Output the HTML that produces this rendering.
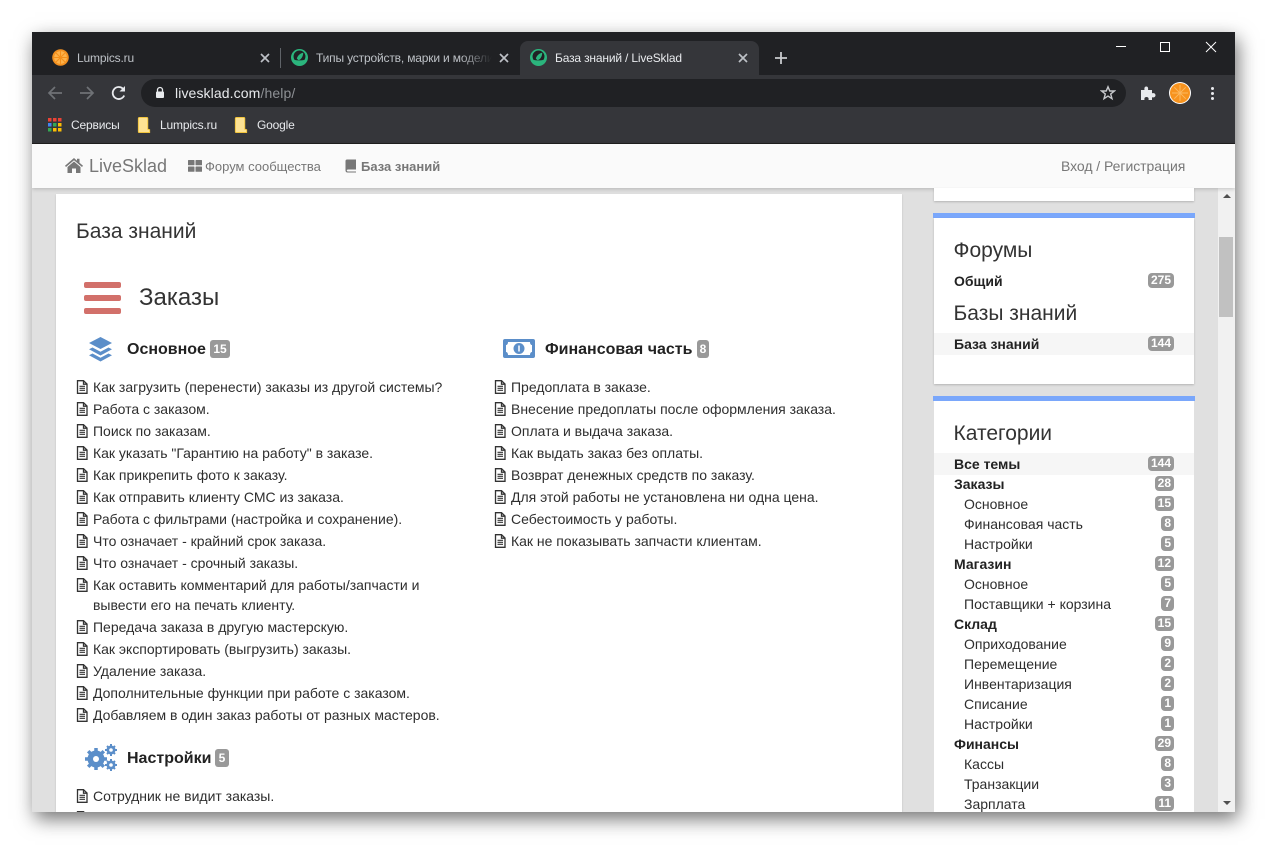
<!DOCTYPE html>
<html><head><meta charset="utf-8"><style>
html,body{margin:0;padding:0;background:#fff;width:1267px;height:845px;overflow:hidden;font-family:"Liberation Sans",sans-serif}
#win{position:absolute;left:32px;top:32px;width:1203px;height:780px;box-shadow:3px 7px 18px 0 rgba(0,0,0,.55);background:#e0e0e0;overflow:hidden}
.a{position:absolute;white-space:nowrap}
svg{position:absolute;display:block}
.t{font-size:12px;line-height:16px;color:#dadce0;letter-spacing:-.17px}
.r{position:absolute;left:0;height:22px;line-height:22px;font-size:14px;color:#2e2e2e;white-space:nowrap}
.r svg{left:0;top:4px}
.r span{position:absolute;left:17px;letter-spacing:-.01px}
.h{font-size:16px;font-weight:bold;color:#222;line-height:20px}
.b{position:absolute;background:#999;color:#fff;font-weight:bold;font-size:12px;border-radius:3px;text-align:center}
.s{position:absolute;left:0;width:258px;height:20px;line-height:20px;font-size:14px;color:#2e2e2e;white-space:nowrap}
.s span{position:absolute;left:20px}
.s.m span{font-weight:bold;color:#222}
.s.c span{left:30px}
.s i{position:absolute;right:18px;top:2px;height:15px;line-height:14px;background:#999;color:#fff;font-weight:bold;font-size:12px;font-style:normal;border-radius:4px;text-align:center;padding:0 3px}
.s.w i{top:3px}
.hd{position:absolute;left:19.500px;font-size:21px;line-height:24px;color:#333;white-space:nowrap}
</style></head><body>
<svg width="0" height="0" style="position:absolute"><defs>
<symbol id="f" viewBox="0 0 12 14"><path d="M1.500 .7h6l3.500 3.300v9.300h-9.500z M7.500 .7v3.500h3.500" fill="none" stroke="#333" stroke-width="1.300"/><path d="M3.500 6.300h5.500M3.500 8.300h5.500M3.500 10.300h5.500" stroke="#333" stroke-width="1.200"/></symbol>
<symbol id="o" viewBox="0 0 16 16"><circle cx="8" cy="8" r="7.800" fill="#f39020"/><circle cx="8" cy="8" r="6" fill="#fdb24a"/><path d="M8 2V14M2 8H14M3.800 3.800L12.200 12.200M12.200 3.800L3.800 12.200" stroke="#f58f1a" stroke-width="1"/></symbol>
<symbol id="av" viewBox="0 0 20 20"><circle cx="10" cy="10" r="10" fill="#f7931e"/><path d="M10 2V18M2 10H18M4.300 4.300L15.700 15.700M15.700 4.300L4.300 15.700" stroke="#fbb860" stroke-width="1"/></symbol>
<symbol id="g" viewBox="0 0 16 16"><circle cx="8" cy="8" r="8" fill="#2bb57d"/><circle cx="8" cy="7" r="5.600" fill="#202124"/><path d="M11.500 3.500C8.500 4 6 6.500 5.500 9L7 10.500C9.500 10 11.500 7 11.500 3.500z" fill="#2bb57d"/><path d="M2.500 10C6 11 10 11 13.500 10L8 15z" fill="#2bb57d"/></symbol>
<symbol id="x" viewBox="0 0 10 10"><path d="M1 1L9 9M9 1L1 9" stroke="#bdc1c6" stroke-width="1.700" fill="none"/></symbol>
<symbol id="fo" viewBox="0 0 14 17"><path d="M1 1.500C1 .8 1.500 .5 2 .5H10C10.500 .500 11 .8 11 1.500V13L13 13.500V16.500H2C1.500 16.500 1 16 1 15.500z" fill="#fde293" stroke="#f2c53d" stroke-width="1"/></symbol>
</defs></svg>
<div id="win">
<!-- tab strip -->
<div class="a" style="left:0;top:0;width:1203px;height:43px;background:#202124"></div>
<div class="a" style="left:488px;top:9px;width:239px;height:34px;background:#35363a;border-radius:8px 8px 0 0"></div>
<svg style="left:20px;top:17px" width="17" height="17"><use href="#o"/></svg>
<div class="a t" style="left:45px;top:18px;color:#bdc1c6">Lumpics.ru</div>
<svg style="left:228px;top:21px" width="10" height="10"><use href="#x"/></svg>
<div class="a" style="left:248px;top:16px;width:1px;height:20px;background:#5f6368"></div>
<svg style="left:259px;top:17px" width="17" height="17"><use href="#g"/></svg>
<div class="a t" style="left:284px;top:18px;color:#bdc1c6;width:176px;overflow:hidden;-webkit-mask-image:linear-gradient(to right,#000 82%,transparent);mask-image:linear-gradient(to right,#000 82%,transparent)">Типы устройств, марки и модели</div>
<svg style="left:467px;top:21px" width="10" height="10"><use href="#x"/></svg>
<svg style="left:498px;top:17px" width="17" height="17"><use href="#g"/></svg>
<div class="a t" style="left:523px;top:18px;color:#e8eaed">База знаний / LiveSklad</div>
<svg style="left:706px;top:21px" width="10" height="10"><use href="#x"/></svg>
<svg style="left:742px;top:19px" width="14" height="14"><path d="M7 1V13M1 7H13" stroke="#c8cacd" stroke-width="1.800"/></svg>
<div class="a" style="left:1084px;top:14px;width:10px;height:1px;background:#fff"></div>
<div class="a" style="left:1128px;top:10px;width:8px;height:8px;border:1px solid #fff"></div>
<svg style="left:1173px;top:9px" width="12" height="12"><path d="M1 1L11 11M11 1L1 11" stroke="#fff" stroke-width="1"/></svg>
<!-- toolbar -->
<div class="a" style="left:0;top:43px;width:1203px;height:68px;background:#35363a"></div>
<div class="a" style="left:0;top:111px;width:1203px;height:1px;background:#1f1f1f"></div>
<svg style="left:14px;top:53px" width="18" height="16"><path d="M16 8H3M9 2L3 8L9 14" fill="none" stroke="#6f7276" stroke-width="1.700"/></svg>
<svg style="left:46px;top:53px" width="18" height="16"><path d="M2 8H15M9 2L15 8L9 14" fill="none" stroke="#6f7276" stroke-width="1.700"/></svg>
<svg style="left:78px;top:52px" width="18" height="18"><path d="M14.200 11.500A6 6 0 1 1 13 4.800" fill="none" stroke="#e8eaed" stroke-width="1.800"/><path d="M15 2V7.500H9.500z" fill="#e8eaed"/></svg>
<div class="a" style="left:109px;top:47px;width:985px;height:28px;background:#202124;border-radius:14px"></div>
<svg style="left:123px;top:54px" width="10" height="13"><path d="M2.500 5.500V4A2.500 2.500 0 0 1 7.500 4V5.500" fill="none" stroke="#e8eaed" stroke-width="1.300"/><rect x="1" y="5.500" width="8" height="6.500" rx="1" fill="#e8eaed"/></svg>
<div class="a" style="left:143px;top:52px;font-size:14px;line-height:18px;color:#e8eaed;letter-spacing:.11px">livesklad.com<span style="color:#8d9094">/help/</span></div>
<svg style="left:1068px;top:53px" width="16" height="16"><path d="M8 1.800L9.800 6H14.400L10.700 9L12 13.700L8 11.100L4 13.700L5.300 9L1.600 6H6.200z" fill="none" stroke="#c8cacd" stroke-width="1.400"/></svg>
<svg style="left:1108px;top:53px" width="16" height="16"><path d="M1 5H4.500C4 2.500 5 1.500 6.300 1.500S8.500 2.500 8 5H12V8.300C14.500 7.800 15.500 9 15.500 10.300S14.500 12.800 12 12.300V15H8.500C9 12.800 8 12 6.500 12S4 12.800 4.500 15H1z" fill="#e8eaed"/></svg>
<div class="a" style="left:1137px;top:50px;width:22px;height:22px;border-radius:50%;background:#fff"></div>
<svg style="left:1138px;top:51px" width="20" height="20"><use href="#av"/></svg>
<div class="a" style="left:1179px;top:55px;width:3px;height:3px;border-radius:50%;background:#e8eaed;box-shadow:0 5px 0 #e8eaed,0 10px 0 #e8eaed"></div>
<!-- bookmarks -->
<svg style="left:16px;top:86px" width="14" height="14"><g><rect x="0" y="0" width="3.500" height="3.500" fill="#ea4335"/><rect x="5" y="0" width="3.500" height="3.500" fill="#ea4335"/><rect x="10" y="0" width="3.500" height="3.500" fill="#ea4335"/><rect x="0" y="5" width="3.500" height="3.500" fill="#4285f4"/><rect x="5" y="5" width="3.500" height="3.500" fill="#34a853"/><rect x="10" y="5" width="3.500" height="3.500" fill="#fbbc04"/><rect x="0" y="10" width="3.500" height="3.500" fill="#34a853"/><rect x="5" y="10" width="3.500" height="3.500" fill="#fbbc04"/><rect x="10" y="10" width="3.500" height="3.500" fill="#fbbc04"/></g></svg>
<div class="a t" style="left:39px;top:85px;color:#e8eaed">Сервисы</div>
<svg style="left:105px;top:85px" width="14" height="16"><use href="#fo"/></svg>
<div class="a t" style="left:128px;top:85px;color:#e8eaed">Lumpics.ru</div>
<svg style="left:202px;top:85px" width="14" height="16"><use href="#fo"/></svg>
<div class="a t" style="left:225px;top:85px;color:#e8eaed">Google</div>
<!-- page -->
<div class="a" style="left:0;top:112px;width:1186px;height:668px;background:#e0e0e0"></div>
<div class="a" style="left:1186px;top:156px;width:17px;height:624px;background:#f1f1f1"></div>
<div class="a" style="left:1187px;top:205px;width:14px;height:80px;background:#c1c1c1"></div>
<svg style="left:1190px;top:161px" width="10" height="6"><path d="M1 5L5 1L9 5z" fill="#505050"/></svg>
<svg style="left:1190px;top:768px" width="10" height="6"><path d="M1 1L5 5L9 1z" fill="#505050"/></svg>
<!-- navbar -->
<div class="a" style="left:0;top:112px;width:1203px;height:44px;background:#fafafa;box-shadow:0 1px 4px rgba(0,0,0,.2)"></div>
<svg style="left:32px;top:125px" width="20" height="17" viewBox="0 0 20 17"><path d="M10 1L1 8.800L2 10L10 3.300L18 10L19 8.800L15.500 5.800V1.800H13V3.700z" fill="#777"/><path d="M10 4.500L3.500 10V16H8V11.500H12V16H16.500V10z" fill="#777"/></svg>
<div class="a" style="left:57px;top:123px;font-size:18px;line-height:22px;color:#777">LiveSklad</div>
<svg style="left:156px;top:128px" width="14" height="12"><g fill="#777"><rect x="0" y="0" width="6.500" height="5.300" rx=".6"/><rect x="7.500" y="0" width="6.500" height="5.300" rx=".6"/><rect x="0" y="6.500" width="6.500" height="5.300" rx=".6"/><rect x="7.500" y="6.500" width="6.500" height="5.300" rx=".6"/></g></svg>
<div class="a" style="left:173px;top:126px;font-size:13px;line-height:17px;color:#777">Форум сообщества</div>
<svg style="left:313px;top:127px" width="12" height="14"><path d="M2 .5H11V10.500H3C2 10.500 1.800 11.200 1.800 11.500S2 12.500 3 12.500H11V13.500H2.500C1.200 13.500 .5 12.500 .5 11.500V2C.5 1 1.200 .5 2 .5z" fill="#777"/></svg>
<div class="a" style="left:329px;top:126px;font-size:13px;line-height:17px;color:#777;font-weight:bold">База знаний</div>
<div class="a" style="left:1029px;top:126px;font-size:14px;line-height:17px;color:#777;letter-spacing:-.05px">Вход / Регистрация</div>
<!-- main card -->
<div class="a" style="left:24px;top:162px;width:846px;height:618px;background:#fff;box-shadow:0 1px 2px rgba(0,0,0,.15)">
<div class="a" style="left:20px;top:26px;font-size:21px;line-height:24px;color:#333">База знаний</div>
<div class="a" style="left:28px;top:88px;width:37px;height:6px;background:#d2706a;border-radius:2px"></div>
<div class="a" style="left:28px;top:101px;width:37px;height:6px;background:#d2706a;border-radius:2px"></div>
<div class="a" style="left:28px;top:114px;width:37px;height:6px;background:#d2706a;border-radius:2px"></div>
<div class="a" style="left:83px;top:90px;font-size:24px;line-height:28px;color:#333">Заказы</div>
<svg style="left:33px;top:143px" width="23" height="25" viewBox="0 0 23 25"><path d="M11.500 0L23 6L11.500 12L0 6z" fill="#5b8ec9"/><path d="M3.500 10.500L0 12.300L11.500 18.500L23 12.300L19.500 10.500L11.500 14.700z" fill="#5b8ec9"/><path d="M3.500 16.500L0 18.300L11.500 24.500L23 18.300L19.500 16.500L11.500 20.700z" fill="#5b8ec9"/></svg>
<div class="a h" style="left:71px;top:146px">Основное</div>
<div class="b" style="left:154px;top:146px;width:20px;height:18px;line-height:18px">15</div>
<svg style="left:447px;top:145px" width="32" height="19" viewBox="0 0 32 19"><rect width="32" height="19" rx="2" fill="#5b8ec9"/><path d="M5 3H27C27 5 28 6 29 6V13C28 13 27 14 27 16H5C5 14 4 13 3 13V6C4 6 5 5 5 3z" fill="#fff"/><circle cx="16" cy="9.500" r="5.500" fill="#5b8ec9"/><path d="M16 6.500V12.500" stroke="#fff" stroke-width="1.500"/></svg>
<div class="a h" style="left:489px;top:146px">Финансовая часть</div>
<div class="b" style="left:641px;top:146px;width:12px;height:18px;line-height:18px">8</div>
<div class="a" style="left:20px;top:182px;width:400px;height:360px">
<div class="r" style="top:0"><svg width="12" height="14"><use href="#f"/></svg><span>Как загрузить (перенести) заказы из другой системы?</span></div>
<div class="r" style="top:22px"><svg width="12" height="14"><use href="#f"/></svg><span>Работа с заказом.</span></div>
<div class="r" style="top:44px"><svg width="12" height="14"><use href="#f"/></svg><span>Поиск по заказам.</span></div>
<div class="r" style="top:66px"><svg width="12" height="14"><use href="#f"/></svg><span>Как указать "Гарантию на работу" в заказе.</span></div>
<div class="r" style="top:88px"><svg width="12" height="14"><use href="#f"/></svg><span>Как прикрепить фото к заказу.</span></div>
<div class="r" style="top:110px"><svg width="12" height="14"><use href="#f"/></svg><span>Как отправить клиенту СМС из заказа.</span></div>
<div class="r" style="top:132px"><svg width="12" height="14"><use href="#f"/></svg><span>Работа с фильтрами (настройка и сохранение).</span></div>
<div class="r" style="top:154px"><svg width="12" height="14"><use href="#f"/></svg><span>Что означает - крайний срок заказа.</span></div>
<div class="r" style="top:176px"><svg width="12" height="14"><use href="#f"/></svg><span>Что означает - срочный заказы.</span></div>
<div class="r" style="top:198px"><svg width="12" height="14"><use href="#f"/></svg><span>Как оставить комментарий для работы/запчасти и</span></div>
<div class="r" style="top:218px"><span>вывести его на печать клиенту.</span></div>
<div class="r" style="top:240px"><svg width="12" height="14"><use href="#f"/></svg><span>Передача заказа в другую мастерскую.</span></div>
<div class="r" style="top:262px"><svg width="12" height="14"><use href="#f"/></svg><span>Как экспортировать (выгрузить) заказы.</span></div>
<div class="r" style="top:284px"><svg width="12" height="14"><use href="#f"/></svg><span>Удаление заказа.</span></div>
<div class="r" style="top:306px"><svg width="12" height="14"><use href="#f"/></svg><span>Дополнительные функции при работе с заказом.</span></div>
<div class="r" style="top:328px"><svg width="12" height="14"><use href="#f"/></svg><span>Добавляем в один заказ работы от разных мастеров.</span></div>
</div>
<div class="a" style="left:438px;top:182px;width:400px;height:180px">
<div class="r" style="top:0"><svg width="12" height="14"><use href="#f"/></svg><span>Предоплата в заказе.</span></div>
<div class="r" style="top:22px"><svg width="12" height="14"><use href="#f"/></svg><span>Внесение предоплаты после оформления заказа.</span></div>
<div class="r" style="top:44px"><svg width="12" height="14"><use href="#f"/></svg><span>Оплата и выдача заказа.</span></div>
<div class="r" style="top:66px"><svg width="12" height="14"><use href="#f"/></svg><span>Как выдать заказ без оплаты.</span></div>
<div class="r" style="top:88px"><svg width="12" height="14"><use href="#f"/></svg><span>Возврат денежных средств по заказу.</span></div>
<div class="r" style="top:110px"><svg width="12" height="14"><use href="#f"/></svg><span>Для этой работы не установлена ни одна цена.</span></div>
<div class="r" style="top:132px"><svg width="12" height="14"><use href="#f"/></svg><span>Себестоимость у работы.</span></div>
<div class="r" style="top:154px"><svg width="12" height="14"><use href="#f"/></svg><span>Как не показывать запчасти клиентам.</span></div>
</div>
<svg style="left:28px;top:550px" width="34" height="27" viewBox="0 0 34 27"><g fill="#5b8ec9"><circle cx="12" cy="15" r="8.500"/><g stroke="#5b8ec9" stroke-width="3.500"><path d="M12 4V26M1 15H23M4.200 7.200L19.800 22.800M19.800 7.200L4.200 22.800"/></g><circle cx="27" cy="6" r="4.500"/><circle cx="27" cy="21" r="4.500"/><g stroke="#5b8ec9" stroke-width="2"><path d="M27 0V12M21 6H33M23 2L31 10M31 2L23 10M27 15V27M21 21H33M23 17L31 25M31 17L23 25"/></g></g><circle cx="12" cy="15" r="3" fill="#fff"/><circle cx="27" cy="6" r="1.800" fill="#fff"/><circle cx="27" cy="21" r="1.800" fill="#fff"/></svg>
<div class="a h" style="left:71px;top:555px">Настройки</div>
<div class="b" style="left:159px;top:555px;width:14px;height:18px;line-height:18px">5</div>
<div class="a" style="left:20px;top:591px;width:400px;height:30px">
<div class="r" style="top:0"><svg width="12" height="14"><use href="#f"/></svg><span>Сотрудник не видит заказы.</span></div>
<div class="r" style="top:22px"><svg width="12" height="14"><use href="#f"/></svg></div>
</div>
</div>
<!-- sidebar -->
<div class="a" style="left:902px;top:156px;width:260px;height:13px;background:#fff;box-shadow:0 1px 2px rgba(0,0,0,.2)"></div>
<div class="a" style="left:901px;top:181px;width:262px;height:5px;background:#7aa7fb"></div>
<div class="a" style="left:902px;top:186px;width:260px;height:166px;background:#fff;box-shadow:0 1px 2px rgba(0,0,0,.2)">
<div class="hd" style="top:21px">Форумы</div>
<div class="s m" style="top:53px"><span>Общий</span><i>275</i></div>
<div class="hd" style="top:84px">Базы знаний</div>
<div class="s m w" style="top:115px;width:260px;height:22px;background:#f6f6f6;line-height:22px"><span>База знаний</span><i style="right:20px">144</i></div>
</div>
<div class="a" style="left:901px;top:364px;width:262px;height:5px;background:#7aa7fb"></div>
<div class="a" style="left:902px;top:369px;width:260px;height:420px;background:#fff">
<div class="hd" style="top:21px">Категории</div>
<div class="s m w" style="top:52px;width:260px;height:22px;background:#f6f6f6;line-height:22px"><span>Все темы</span><i style="right:20px">144</i></div>
<div class="s m" style="top:73px"><span>Заказы</span><i>28</i></div>
<div class="s c" style="top:93px"><span>Основное</span><i>15</i></div>
<div class="s c" style="top:113px"><span>Финансовая часть</span><i>8</i></div>
<div class="s c" style="top:133px"><span>Настройки</span><i>5</i></div>
<div class="s m" style="top:153px"><span>Магазин</span><i>12</i></div>
<div class="s c" style="top:173px"><span>Основное</span><i>5</i></div>
<div class="s c" style="top:193px"><span>Поставщики + корзина</span><i>7</i></div>
<div class="s m" style="top:213px"><span>Склад</span><i>15</i></div>
<div class="s c" style="top:233px"><span>Оприходование</span><i>9</i></div>
<div class="s c" style="top:253px"><span>Перемещение</span><i>2</i></div>
<div class="s c" style="top:273px"><span>Инвентаризация</span><i>2</i></div>
<div class="s c" style="top:293px"><span>Списание</span><i>1</i></div>
<div class="s c" style="top:313px"><span>Настройки</span><i>1</i></div>
<div class="s m" style="top:333px"><span>Финансы</span><i>29</i></div>
<div class="s c" style="top:353px"><span>Кассы</span><i>8</i></div>
<div class="s c" style="top:373px"><span>Транзакции</span><i>3</i></div>
<div class="s c" style="top:393px"><span>Зарплата</span><i>11</i></div>
</div>
</div>
</body></html>
